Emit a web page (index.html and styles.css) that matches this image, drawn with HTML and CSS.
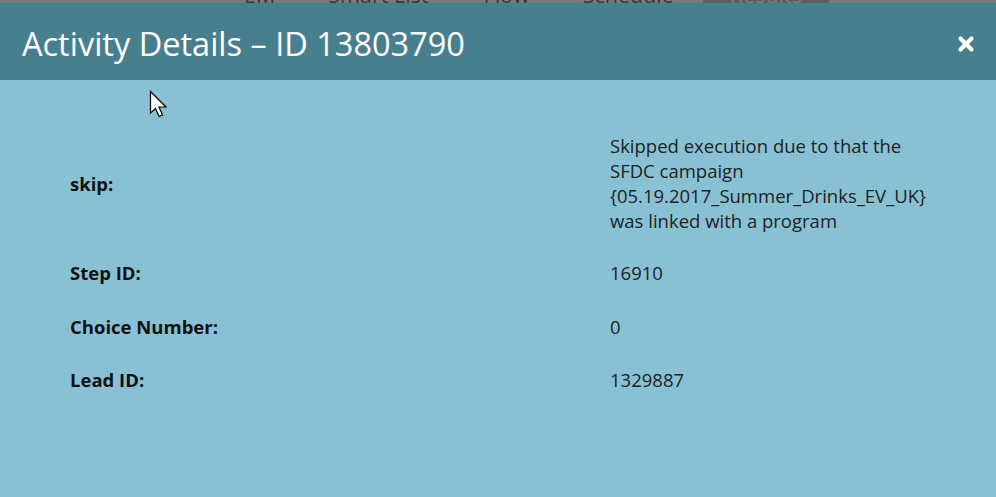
FILE: index.html
```html
<!DOCTYPE html>
<html>
<head>
<meta charset="utf-8">
<link rel="stylesheet" href="styles.css">
</head>
<body>
<div class="topbar">
  <div class="tabs">
    <span class="tab t-em">EM</span>
    <span class="tab t-sl">Smart List</span>
    <span class="tab t-flow">Flow</span>
    <span class="tab t-sch">Schedule</span>
    <span class="tab t-res">Results</span>
  </div>
</div>
<div class="dialog">
  <div class="header">
    <h1 class="title">Activity Details – ID 13803790</h1>
    <svg class="close" width="18" height="18" viewBox="0 0 18 18"><path d="M3.5 3.5 L14.5 14.5 M14.5 3.5 L3.5 14.5" stroke="#fff" stroke-width="4.2" stroke-linecap="round"/></svg>
  </div>
  <div class="body">
    <table class="details">
      <tr class="first"><td class="label">skip:</td><td class="value">Skipped execution due to that the SFDC campaign {05.19.2017_Summer_Drinks_EV_UK} was linked with a program</td></tr>
      <tr><td class="label">Step ID:</td><td class="value">16910</td></tr>
      <tr><td class="label">Choice Number:</td><td class="value">0</td></tr>
      <tr><td class="label">Lead ID:</td><td class="value">1329887</td></tr>
    </table>
  </div>
</div>
<svg class="cursor" width="20" height="30" viewBox="0 0 20 30"><path d="M1.5 1.5 L1.5 23 L6.5 18.5 L10 26.5 L13.5 25 L10 17 L17 17 Z" fill="#fff" stroke="#000" stroke-width="1.2" stroke-linejoin="miter"/></svg>
</body>
</html>
```
FILE: styles.css
```css
html, body {
  margin: 0;
  padding: 0;
  height: 100%;
  overflow: hidden;
}
body {
  font-family: "Open Sans", "Liberation Sans", sans-serif;
  background: #88c1d3;
  position: relative;
}
.topbar {
  height: 3px;
  background: #7a7a7a;
  overflow: hidden;
}
.tabs {
  display: flex;
  height: 3px;
}
.tab {
  font-size: 21.5px;
  line-height: 22px;
  margin-top: -16px;
  color: #3a3a3a;
  display: block;
  height: 22px;
  white-space: nowrap;
}
.t-em { margin-left: 244px; }
.t-sl { margin-left: 53px; }
.t-flow { margin-left: 55px; }
.t-sch { margin-left: 53px; }
.t-res { margin-left: 29px; background: #5f5f5f; color: #7d7d7d; width: 126px; text-align: center; }
.dialog {
  display: flex;
  flex-direction: column;
}
.header {
  height: 77px;
  background: #477f8f;
  display: flex;
  align-items: center;
  justify-content: space-between;
  padding: 0 21px 0 22px;
}
.title {
  margin: 0;
  font-weight: 400;
  font-size: 32.5px;
  line-height: 40px;
  color: #fff;
  margin-top: 4px;
}
.close {
  display: block;
  margin-top: 4px;
}
.body {
  padding: 43px 0 0 58px;
}
.details {
  border-collapse: collapse;
}
.details td {
  padding: 14.5px 12px;
  font-size: 18.5px;
  line-height: 25px;
  vertical-align: middle;
}
.details .first td {
  padding-top: 10px;
  padding-bottom: 12px;
}
.details tr:last-child td {
  padding-top: 14px;
}
.label {
  font-weight: 700;
  color: #111;
  width: 516px;
}
.value {
  color: #222;
  width: 340px;
}
.cursor {
  position: absolute;
  left: 149px;
  top: 90px;
}
```
